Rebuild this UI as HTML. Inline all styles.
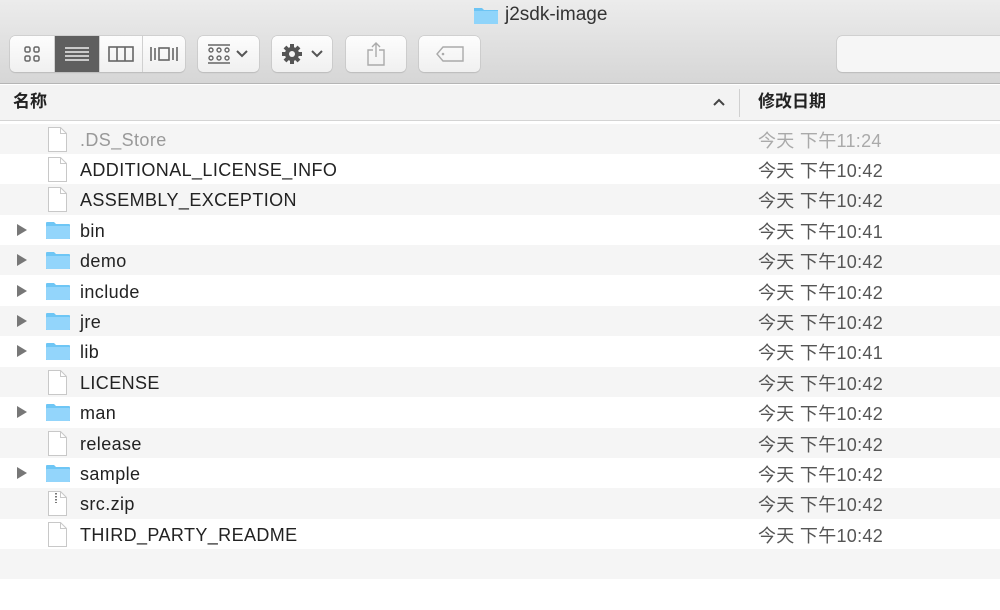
<!DOCTYPE html>
<html><head><meta charset="utf-8"><style>
*{margin:0;padding:0;box-sizing:border-box}
body{width:1000px;height:609px;overflow:hidden;background:#fff;font-family:"Liberation Sans","Noto Sans CJK SC",sans-serif;position:relative}
.tb{position:absolute;left:0;top:0;width:1000px;height:84px;background:linear-gradient(#ececec,#d6d6d6);border-bottom:1px solid #b5b5b5}
.title{position:absolute;top:4px;left:473px;font-size:19px;color:#333;display:flex;align-items:center;gap:6px}
.btn{position:absolute;top:36px;height:36px;background:linear-gradient(#fdfdfd,#f0f0f0);border-radius:5px;box-shadow:0 0 0 .5px #bdbdbd,0 1px 1px rgba(0,0,0,.15)}
.seg{position:absolute;top:0;height:36px;border-right:1px solid #d0d0d0;display:flex;align-items:center;justify-content:center}
.hdr{position:absolute;top:85px;left:0;width:1000px;height:36px;background:#f3f3f3;border-bottom:1px solid #d4d4d4;font-size:17px;font-weight:bold;color:#222}
.row{position:absolute;left:0;width:1000px;height:30.4px;font-size:18px;color:#222}
.row.g{background:#f5f5f5}
.row .n{position:absolute;left:80px;top:6px;line-height:20px;letter-spacing:.4px}
.row .d{position:absolute;left:758px;top:7px;line-height:20px;color:#555;letter-spacing:.3px}
.tri{position:absolute;left:17px;top:9px;width:0;height:0;border-left:10px solid #777;border-top:6px solid transparent;border-bottom:6px solid transparent}
.fold{position:absolute;left:45px;top:6px}
.file{position:absolute;left:48px;top:3px}
</style></head><body>
<div class="tb">
 <div class="title"><svg width="26" height="20" viewBox="0 0 26 20"><path d="M1 3h8l2 2h14v14H1z" fill="#6cc4f4"/><rect x="1" y="6" width="24" height="13" fill="#8fd4fa"/></svg>j2sdk-image</div>
 <div class="btn" style="left:10px;width:175px;overflow:hidden">
  <div class="seg" style="left:0;width:45px"><svg width="16" height="16"><g fill="none" stroke="#666" stroke-width="1.5"><rect x="1" y="1" width="5" height="5" rx="1.5"/><rect x="10" y="1" width="5" height="5" rx="1.5"/><rect x="1" y="10" width="5" height="5" rx="1.5"/><rect x="10" y="10" width="5" height="5" rx="1.5"/></g></svg></div>
  <div class="seg" style="left:45px;width:45px;background:#5f5f5f"><svg width="24" height="16"><g stroke="#eee" stroke-width="1.5"><path d="M0 2h24M0 6h24M0 10h24M0 14h24"/></g></svg></div>
  <div class="seg" style="left:90px;width:43px"><svg width="26" height="16"><g fill="none" stroke="#666" stroke-width="1.6"><rect x="1" y="1" width="24" height="14"/><path d="M9 1v14M17 1v14"/></g></svg></div>
  <div class="seg" style="left:133px;width:42px;border:none"><svg width="30" height="18"><g fill="none" stroke="#666" stroke-width="1.6"><rect x="10" y="3" width="10" height="12"/><path d="M2 2v14M6 3v12M24 3v12M28 2v14"/></g></svg></div>
 </div>
 <div class="btn" style="left:198px;width:61px;display:flex;align-items:center;padding-left:10px;gap:6px"><svg width="22" height="20"><g fill="none" stroke="#666" stroke-width="1.4"><path d="M0 1h22M0 19h22"/><circle cx="3" cy="6" r="2"/><circle cx="11" cy="6" r="2"/><circle cx="19" cy="6" r="2"/><circle cx="3" cy="14" r="2"/><circle cx="11" cy="14" r="2"/><circle cx="19" cy="14" r="2"/></g></svg><svg width="12" height="8"><path d="M1 1l5 5 5-5" fill="none" stroke="#555" stroke-width="2"/></svg></div>
 <div class="btn" style="left:272px;width:60px;display:flex;align-items:center;padding-left:9px;gap:8px"><svg width="22" height="22" viewBox="0 0 22 22"><g fill="#555"><circle cx="11" cy="11" r="7"/><g stroke="#555" stroke-width="4"><path d="M11 1v20M1 11h20M4 4l14 14M18 4L4 18"/></g></g><circle cx="11" cy="11" r="3" fill="#f5f5f5"/></svg><svg width="12" height="8"><path d="M1 1l5 5 5-5" fill="none" stroke="#555" stroke-width="2"/></svg></div>
 <div class="btn" style="left:346px;width:60px;display:flex;align-items:center;justify-content:center"><svg width="18" height="24"><g fill="none" stroke="#aaa" stroke-width="1.4"><path d="M6 8H1v15h16V8h-5M9 15V1M5 5l4-4 4 4"/></g></svg></div>
 <div class="btn" style="left:419px;width:61px;display:flex;align-items:center;justify-content:center"><svg width="28" height="16"><path d="M7 1h20v14H7L1 8z" fill="none" stroke="#aaa" stroke-width="1.4"/><circle cx="7" cy="8" r="1.3" fill="#aaa"/></svg></div>
 <div class="btn" style="left:837px;width:170px;background:#f6f6f6"></div>
</div>
<div class="hdr"><span style="position:absolute;left:13px;top:6px;line-height:22px">名称</span><svg style="position:absolute;left:713px;top:13px" width="12" height="8"><path d="M1 7l5-5 5 5" fill="none" stroke="#444" stroke-width="2"/></svg><div style="position:absolute;left:739px;top:4px;width:1px;height:28px;background:#d0d0d0"></div><span style="position:absolute;left:758px;top:6px;line-height:22px">修改日期</span></div>
<div id="rows"></div>
<script>
var R=[["f",".DS_Store","今天 下午11:24",1],["f","ADDITIONAL_LICENSE_INFO"],["f","ASSEMBLY_EXCEPTION"],["d","bin","今天 下午10:41"],["d","demo"],["d","include"],["d","jre"],["d","lib","今天 下午10:41"],["f","LICENSE"],["d","man"],["f","release"],["d","sample"],["z","src.zip"],["f","THIRD_PARTY_README"],["e"],["e"]];
var h="";
R.forEach(function(r,i){
 var top=123.5+i*30.4;
 h+='<div class="row'+(i%2==0&&i<15?' g':'')+'" style="top:'+top+'px">';
 if(r[0]!="e"){
  if(r[0]=="d")h+='<div class="tri"></div><svg class="fold" width="26" height="19" viewBox="0 0 26 19"><path d="M1 2a1 1 0 0 1 1-1h7l2 2h13a1 1 0 0 1 1 1v14H1z" fill="#6ec6f5"/><rect x="1" y="5" width="24" height="13" rx="1" fill="#93d5fb"/></svg>';
  else h+='<svg class="file" width="19" height="25" viewBox="0 0 19 25"><path d="M.5 .5h12l6 6v18H.5z" fill="#fff" stroke="#c8c8c8"/><path d="M12.5 .5v6h6" fill="none" stroke="#c8c8c8"/>'+(r[0]=="z"?'<path d="M8 2v10" stroke="#777" stroke-width="2" stroke-dasharray="1.5 1.5"/>':'')+'</svg>';
  var c=r[3]?'color:#999':'';
  h+='<span class="n" style="'+c+'">'+r[1]+'</span><span class="d" style="'+(r[3]?'color:#aaa':'')+'">'+(r[2]||"今天 下午10:42")+'</span>';
 }
 h+='</div>';
});
document.getElementById("rows").innerHTML=h;
</script>
</body></html>
